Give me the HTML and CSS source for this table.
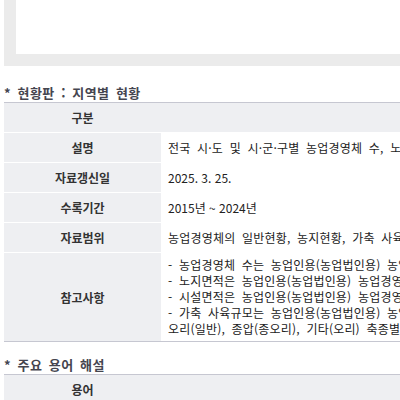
FILE: index.html
```html
<!DOCTYPE html>
<html lang="ko">
<head>
    <meta charset="UTF-8">
    <meta name="viewport" content="width=device-width, initial-scale=1.0">
    <title>현황판 : 지역별 현황</title>
    <link rel="stylesheet" href="styles.css">
</head>
<body>
    <div class="wrap">
        <!-- 차트 영역 -->
        <div class="chart-box"></div>

        <h3 class="sub-title">* 현황판 : 지역별 현황</h3>
        <table class="info-table">
            <tr>
                <th class="label">구분</th>
                <th class="head">내용</th>
            </tr>
            <tr>
                <th class="label">설명</th>
                <td class="value">전국 시·도 및 시·군·구별 농업경영체 수, 노지면적, 시설면적, 가축 사육규모 현황</td>
            </tr>
            <tr>
                <th class="label">자료갱신일</th>
                <td class="value plain">2025. 3. 25.</td>
            </tr>
            <tr>
                <th class="label">수록기간</th>
                <td class="value plain">2015년 ~ 2024년</td>
            </tr>
            <tr>
                <th class="label">자료범위</th>
                <td class="value">농업경영체의 일반현황, 농지현황, 가축 사육현황</td>
            </tr>
            <tr>
                <th class="label">참고사항</th>
                <td class="value multi">
                    - 농업경영체 수는 농업인용(농업법인용) 농업경영체 등록정보 기준<br>
                    - 노지면적은 농업인용(농업법인용) 농업경영체 경작면적 중 노지면적 합계<br>
                    - 시설면적은 농업인용(농업법인용) 농업경영체 경작면적 중 시설면적 합계<br>
                    - 가축 사육규모는 농업인용(농업법인용) 농업경영체 등록 가축 중 한우, 육우, 젖소, 돼지, 닭,<br>
                    오리(일반), 종압(종오리), 기타(오리) 축종별 사육두수 합계
                </td>
            </tr>
        </table>

        <h3 class="sub-title second">* 주요 용어 해설</h3>
        <table class="info-table">
            <tr>
                <th class="label">용어</th>
                <th class="head">설명</th>
            </tr>
        </table>
    </div>
</body>
</html>
```

FILE: styles.css
```css
body {
    margin: 0;
    padding: 0;
    overflow: hidden;
    font-family: "Noto Sans CJK KR", "DejaVu Sans", sans-serif;
    font-size: 12px;
    color: #222;
    background-color: #fff;
}
.wrap {
    width: 900px;
    padding-left: 4px;
}

/* 상단 차트 박스 */
.chart-box {
    height: 54px;
    border-left: 12px solid #ebebeb;
    border-bottom: 12px solid #ebebeb;
    background-color: #fff;
}

.sub-title {
    margin: 19px 0 1px;
    font-size: 13px;
    line-height: 16px;
    font-weight: bold;
    letter-spacing: 0.4px;
    word-spacing: 2.5px;
    color: #45454f;
}
.sub-title.second {
    margin-top: 15px;
}

/* 정보 테이블 */
.info-table {
    width: 100%;
    border-collapse: collapse;
    border-top: 1px solid #c6c7d1;
    border-bottom: 1px solid #c6c7d1;
}
.info-table th,
.info-table td {
    border-bottom: 1px solid #fff;
}
.info-table tr:last-child th,
.info-table tr:last-child td {
    border-bottom: none;
}
.label {
    width: 157px;
    padding: 6px 0 6px;
    line-height: 17px;
    font-size: 12px;
    font-weight: bold;
    color: #333;
    text-align: center;
    background-color: #eeeff2;
}
.head {
    background-color: #eeeff2;
    font-size: 12px;
    color: #333;
}
.value {
    padding: 4px 7px;
    line-height: 16px;
    letter-spacing: 0.2px;
    word-spacing: 3px;
    white-space: nowrap;
    text-align: left;
    vertical-align: middle;
}
/* 숫자 위주 행은 간격 없이 */
.value.plain {
    letter-spacing: 0;
    word-spacing: 0;
}
```
